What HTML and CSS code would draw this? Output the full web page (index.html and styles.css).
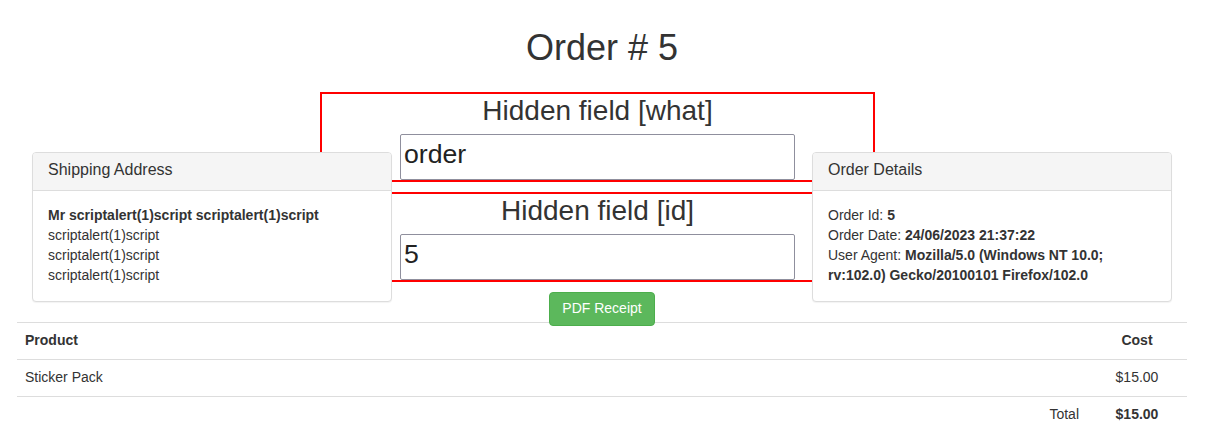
FILE: index.html
```html
<!DOCTYPE html>
<html lang="en">
<head>
<meta charset="utf-8">
<title>Order # 5</title>
<link rel="stylesheet" href="styles.css">
</head>
<body>
<div class="page">
  <h1 class="title">Order # 5</h1>
  <div class="row">
    <div class="col">
      <div class="panel">
        <div class="panel-heading"><h3 class="panel-title">Shipping Address</h3></div>
        <div class="panel-body">
          <strong>Mr scriptalert(1)script scriptalert(1)script</strong><br>
          scriptalert(1)script<br>
          scriptalert(1)script<br>
          scriptalert(1)script
        </div>
      </div>
    </div>
    <div class="col col-middle">
      <div class="hidden-box">
        <div class="hidden-label">Hidden field [what]</div>
        <input class="hidden-input" type="text" value="order">
      </div>
      <div class="hidden-box">
        <div class="hidden-label">Hidden field [id]</div>
        <input class="hidden-input" type="text" value="5">
      </div>
      <div class="btn-wrap"><a class="btn-success">PDF Receipt</a></div>
    </div>
    <div class="col">
      <div class="panel">
        <div class="panel-heading"><h3 class="panel-title">Order Details</h3></div>
        <div class="panel-body">
          Order Id: <strong>5</strong><br>
          Order Date: <strong>24/06/2023 21:37:22</strong><br>
          User Agent: <strong>Mozilla/5.0 (Windows NT 10.0; rv:102.0) Gecko/20100101 Firefox/102.0</strong>
        </div>
      </div>
    </div>
  </div>
  <table class="items">
    <tr>
      <th class="left">Product</th>
      <th class="cost">Cost</th>
    </tr>
    <tr>
      <td class="left">Sticker Pack</td>
      <td class="cost">$15.00</td>
    </tr>
    <tr>
      <td class="right">Total</td>
      <td class="cost"><strong>$15.00</strong></td>
    </tr>
  </table>
</div>
</body>
</html>
```

FILE: styles.css
```css
html, body {
  margin: 0;
  padding: 0;
  background: #fff;
}
body {
  font-family: "Liberation Sans", Arial, Helvetica, sans-serif;
  font-size: 14px;
  line-height: 20px;
  color: #333;
}
.page {
  width: 1170px;
  margin-left: 17px;
}
.title {
  margin: 28px 0 0;
  font-size: 36px;
  font-weight: normal;
  line-height: 40px;
  text-align: center;
}
.row {
  display: grid;
  grid-template-columns: repeat(3, 1fr);
  align-items: start;
  margin-top: 24px;
}
.col {
  padding: 0 15px;
}
.panel {
  position: relative;
  z-index: 1;
  margin-top: 60px;
  margin-bottom: 20px;
  background: #fff;
  border: 1px solid #ddd;
  border-radius: 4px;
  box-shadow: 0 1px 1px rgba(0, 0, 0, 0.05);
}
.panel-heading {
  padding: 8px 15px 12px;
  background: #f5f5f5;
  border-bottom: 1px solid #ddd;
  border-radius: 3px 3px 0 0;
}
.panel-title {
  margin: 0;
  font-size: 16px;
  font-weight: normal;
  line-height: 17px;
  color: #333;
}
.panel-body {
  padding: 14px 15px 16px;
}
.col-middle {
  margin-bottom: -4px;
}
.hidden-box {
  margin: 0 -93px 10px -102px;
  border: 2px solid #f00;
  text-align: center;
}
.hidden-label {
  font-size: 28px;
  line-height: 32px;
  padding-top: 1px;
  margin-bottom: 7px;
  color: #333;
}
.hidden-input {
  display: block;
  box-sizing: border-box;
  width: 395px;
  height: 46px;
  margin: 0 auto;
  padding: 0 3px 6px;
  border: 1px solid #8f8f9d;
  border-radius: 2px;
  font-family: "Liberation Sans", Arial, sans-serif;
  font-size: 26.67px;
  color: #222;
  background: #fff;
}
.btn-wrap {
  display: flex;
  justify-content: center;
}
.btn-success {
  display: inline-block;
  padding: 5px 12px 7px;
  font-size: 14px;
  line-height: 20px;
  color: #fff;
  background: #5cb85c;
  border: 1px solid #4cae4c;
  border-radius: 4px;
}
.items {
  width: 100%;
  border-collapse: collapse;
  border-spacing: 0;
  margin-bottom: 20px;
}
.items th,
.items td {
  padding: 7px 8px 9px;
  line-height: 20px;
  border-top: 1px solid #ddd;
  vertical-align: top;
}
.items th {
  font-weight: bold;
}
.items .left {
  text-align: left;
}
.items .right {
  text-align: right;
}
.items .cost {
  width: 84px;
  text-align: center;
}
```
